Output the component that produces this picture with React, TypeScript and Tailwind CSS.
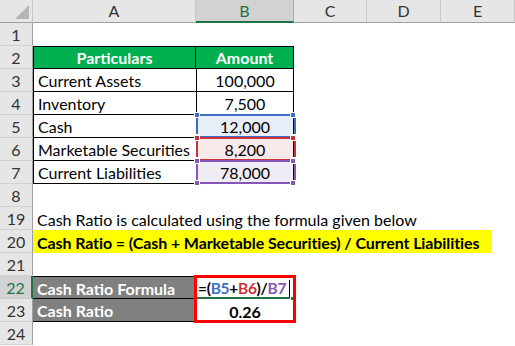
import React from "react";

const FONT = { fontFamily: "Lato, 'Open Sans', sans-serif" };

function Handle({ pos, color }: { pos: string; color: string }) {
  return <div className={`absolute w-[6px] h-[6px] border border-white ${pos} ${color}`} />;
}

function RowHead({ n, active }: { n: string; active?: boolean }) {
  return (
    <div
      className={
        active
          ? "w-[33px] shrink-0 h-full flex items-center justify-center bg-[#d2d2d2] text-[#217346] border-b border-b-[#c8c8c8] border-r-2 border-r-[#217346]"
          : "w-[33px] shrink-0 h-full flex items-center justify-center bg-[#e6e6e6] text-[#333] border-b border-b-[#d0d0d0] border-r border-r-[#9f9f9f]"
      }
    >
      {n}
    </div>
  );
}

function Row({ n, active, children }: { n: string; active?: boolean; children?: React.ReactNode }) {
  return (
    <div className="flex h-[23px] text-[16px] leading-[23px]">
      <RowHead n={n} active={active} />
      {children}
    </div>
  );
}

function DataRow({ n, a, b, kind }: { n: string; a: string; b: string; kind?: "blue" | "red" | "purple" }) {
  const fill =
    kind === "blue" ? "bg-[#e8eef8]" : kind === "red" ? "bg-[#f9e9e9]" : kind === "purple" ? "bg-[#f0ecf6]" : "bg-white";
  const line =
    kind === "blue" ? "border-[#3a6fc4]" : kind === "red" ? "border-[#c8323c]" : "border-[#8556b8]";
  const hc = kind === "blue" ? "bg-[#3a6fc4]" : kind === "red" ? "bg-[#c8323c]" : "bg-[#8556b8]";
  return (
    <Row n={n}>
      <div className="w-[163px] shrink-0 h-full border-l border-b border-black flex items-center pl-[4px] pt-[1px]">{a}</div>
      <div className={`relative w-[98px] shrink-0 h-full border-l border-r border-b border-black flex items-center justify-center pt-[1px] ${fill}`}>
        {b}
        {kind && (
          <>
            <div className={`absolute -left-[1px] -top-[1px] w-[100px] h-[24px] border-2 ${line}`} />
            <Handle pos="-left-[3px] -top-[3px]" color={hc} />
            <Handle pos="-right-[3px] -top-[3px]" color={hc} />
            <Handle pos="-left-[3px] -bottom-[3px]" color={hc} />
            <Handle pos="-right-[3px] -bottom-[3px]" color={hc} />
          </>
        )}
      </div>
    </Row>
  );
}

export default function App() {
  const cols = [
    { l: "A", w: "w-[163px]" },
    { l: "B", w: "w-[98px]", active: true },
    { l: "C", w: "w-[73px]" },
    { l: "D", w: "w-[74px]" },
    { l: "E", w: "w-[74px]" },
  ];
  return (
    <div className="w-[515px] h-[346px] overflow-hidden bg-white text-black" style={FONT}>
      <div className="flex h-[23px] text-[16px]">
        <div className="w-[33px] shrink-0 h-full bg-[#e6e6e6] border-r border-r-[#c8c8c8] border-b border-b-[#9f9f9f] relative">
          <svg className="absolute left-[14px] top-[4px]" width="16" height="16" viewBox="0 0 16 16">
            <polygon points="15,1 15,15 1,15" fill="#b5b5b5" />
          </svg>
        </div>
        {cols.map((c) =>
          c.active ? (
            <div
              key={c.l}
              className={`${c.w} shrink-0 h-full flex items-center justify-center bg-[#d2d2d2] text-[#217346] border-r border-r-[#ababab] border-b-2 border-b-[#217346]`}
            >
              {c.l}
            </div>
          ) : (
            <div
              key={c.l}
              className={`${c.w} shrink-0 h-full flex items-center justify-center bg-[#e6e6e6] text-[#333] border-r border-r-[#c8c8c8] border-b border-b-[#9f9f9f]`}
            >
              {c.l}
            </div>
          )
        )}
      </div>

      <Row n="1" />
      <Row n="2">
        <div className="w-[163px] shrink-0 h-full border border-black bg-[#00b050] text-white font-bold flex items-center justify-center">
          Particulars
        </div>
        <div className="w-[98px] shrink-0 h-full border-t border-r border-b border-black bg-[#00b050] text-white font-bold flex items-center justify-center">
          Amount
        </div>
      </Row>
      <DataRow n="3" a="Current Assets" b="100,000" />
      <DataRow n="4" a="Inventory" b="7,500" />
      <DataRow n="5" a="Cash" b="12,000" kind="blue" />
      <DataRow n="6" a="Marketable Securities" b="8,200" kind="red" />
      <DataRow n="7" a="Current Liabilities" b="78,000" kind="purple" />
      <Row n="8" />
      <Row n="19">
        <div className="flex items-center pl-[4px] pt-[1px] whitespace-nowrap">Cash Ratio is calculated using the formula given below</div>
      </Row>
      <Row n="20">
        <div className="w-[459px] shrink-0 h-full bg-[#ffff00] font-bold flex items-center pl-[4px] pt-[1px] whitespace-nowrap tracking-[-0.1px]">
          Cash Ratio = (Cash + Marketable Securities) / Current Liabilities
        </div>
      </Row>
      <Row n="21" />
      <Row n="22" active>
        <div className="w-[163px] shrink-0 h-full bg-[#808080] text-white font-bold border-t border-b border-black flex items-center pl-[4px] pt-[1px]">
          Cash Ratio Formula
        </div>
        <div className="relative w-[98px] shrink-0 h-full flex items-center pl-[2px] pt-[1px] font-bold whitespace-nowrap text-[15.5px] tracking-[-0.3px]">
          <span className="shrink-0">=(</span>
          <span className="shrink-0 text-[#3a6fc4]">B5</span>
          <span className="shrink-0">+</span>
          <span className="shrink-0 text-[#c8323c]">B6</span>
          <span className="shrink-0">)/</span>
          <span className="shrink-0 text-[#8556b8]">B7</span>
          <span className="shrink-0 ml-[3px] w-px h-[17px] bg-black" />
          <div className="absolute left-[1px] bottom-0 w-[94px] h-[2px] bg-[#217346]" />
          <div className="absolute left-[94px] -bottom-[2px] w-[5px] h-[5px] bg-[#217346] border border-white" />
          <div className="absolute -left-[2px] -top-[1px] w-[102px] h-[48px] border-[3px] border-[#ff0000]" />
        </div>
      </Row>
      <Row n="23">
        <div className="w-[163px] shrink-0 h-full bg-[#808080] text-white font-bold border-b border-black flex items-center pl-[4px] pt-[1px]">
          Cash Ratio
        </div>
        <div className="w-[98px] shrink-0 h-full flex items-center justify-center font-bold pt-[1px]">0.26</div>
      </Row>
      <Row n="24" />
    </div>
  );
}
